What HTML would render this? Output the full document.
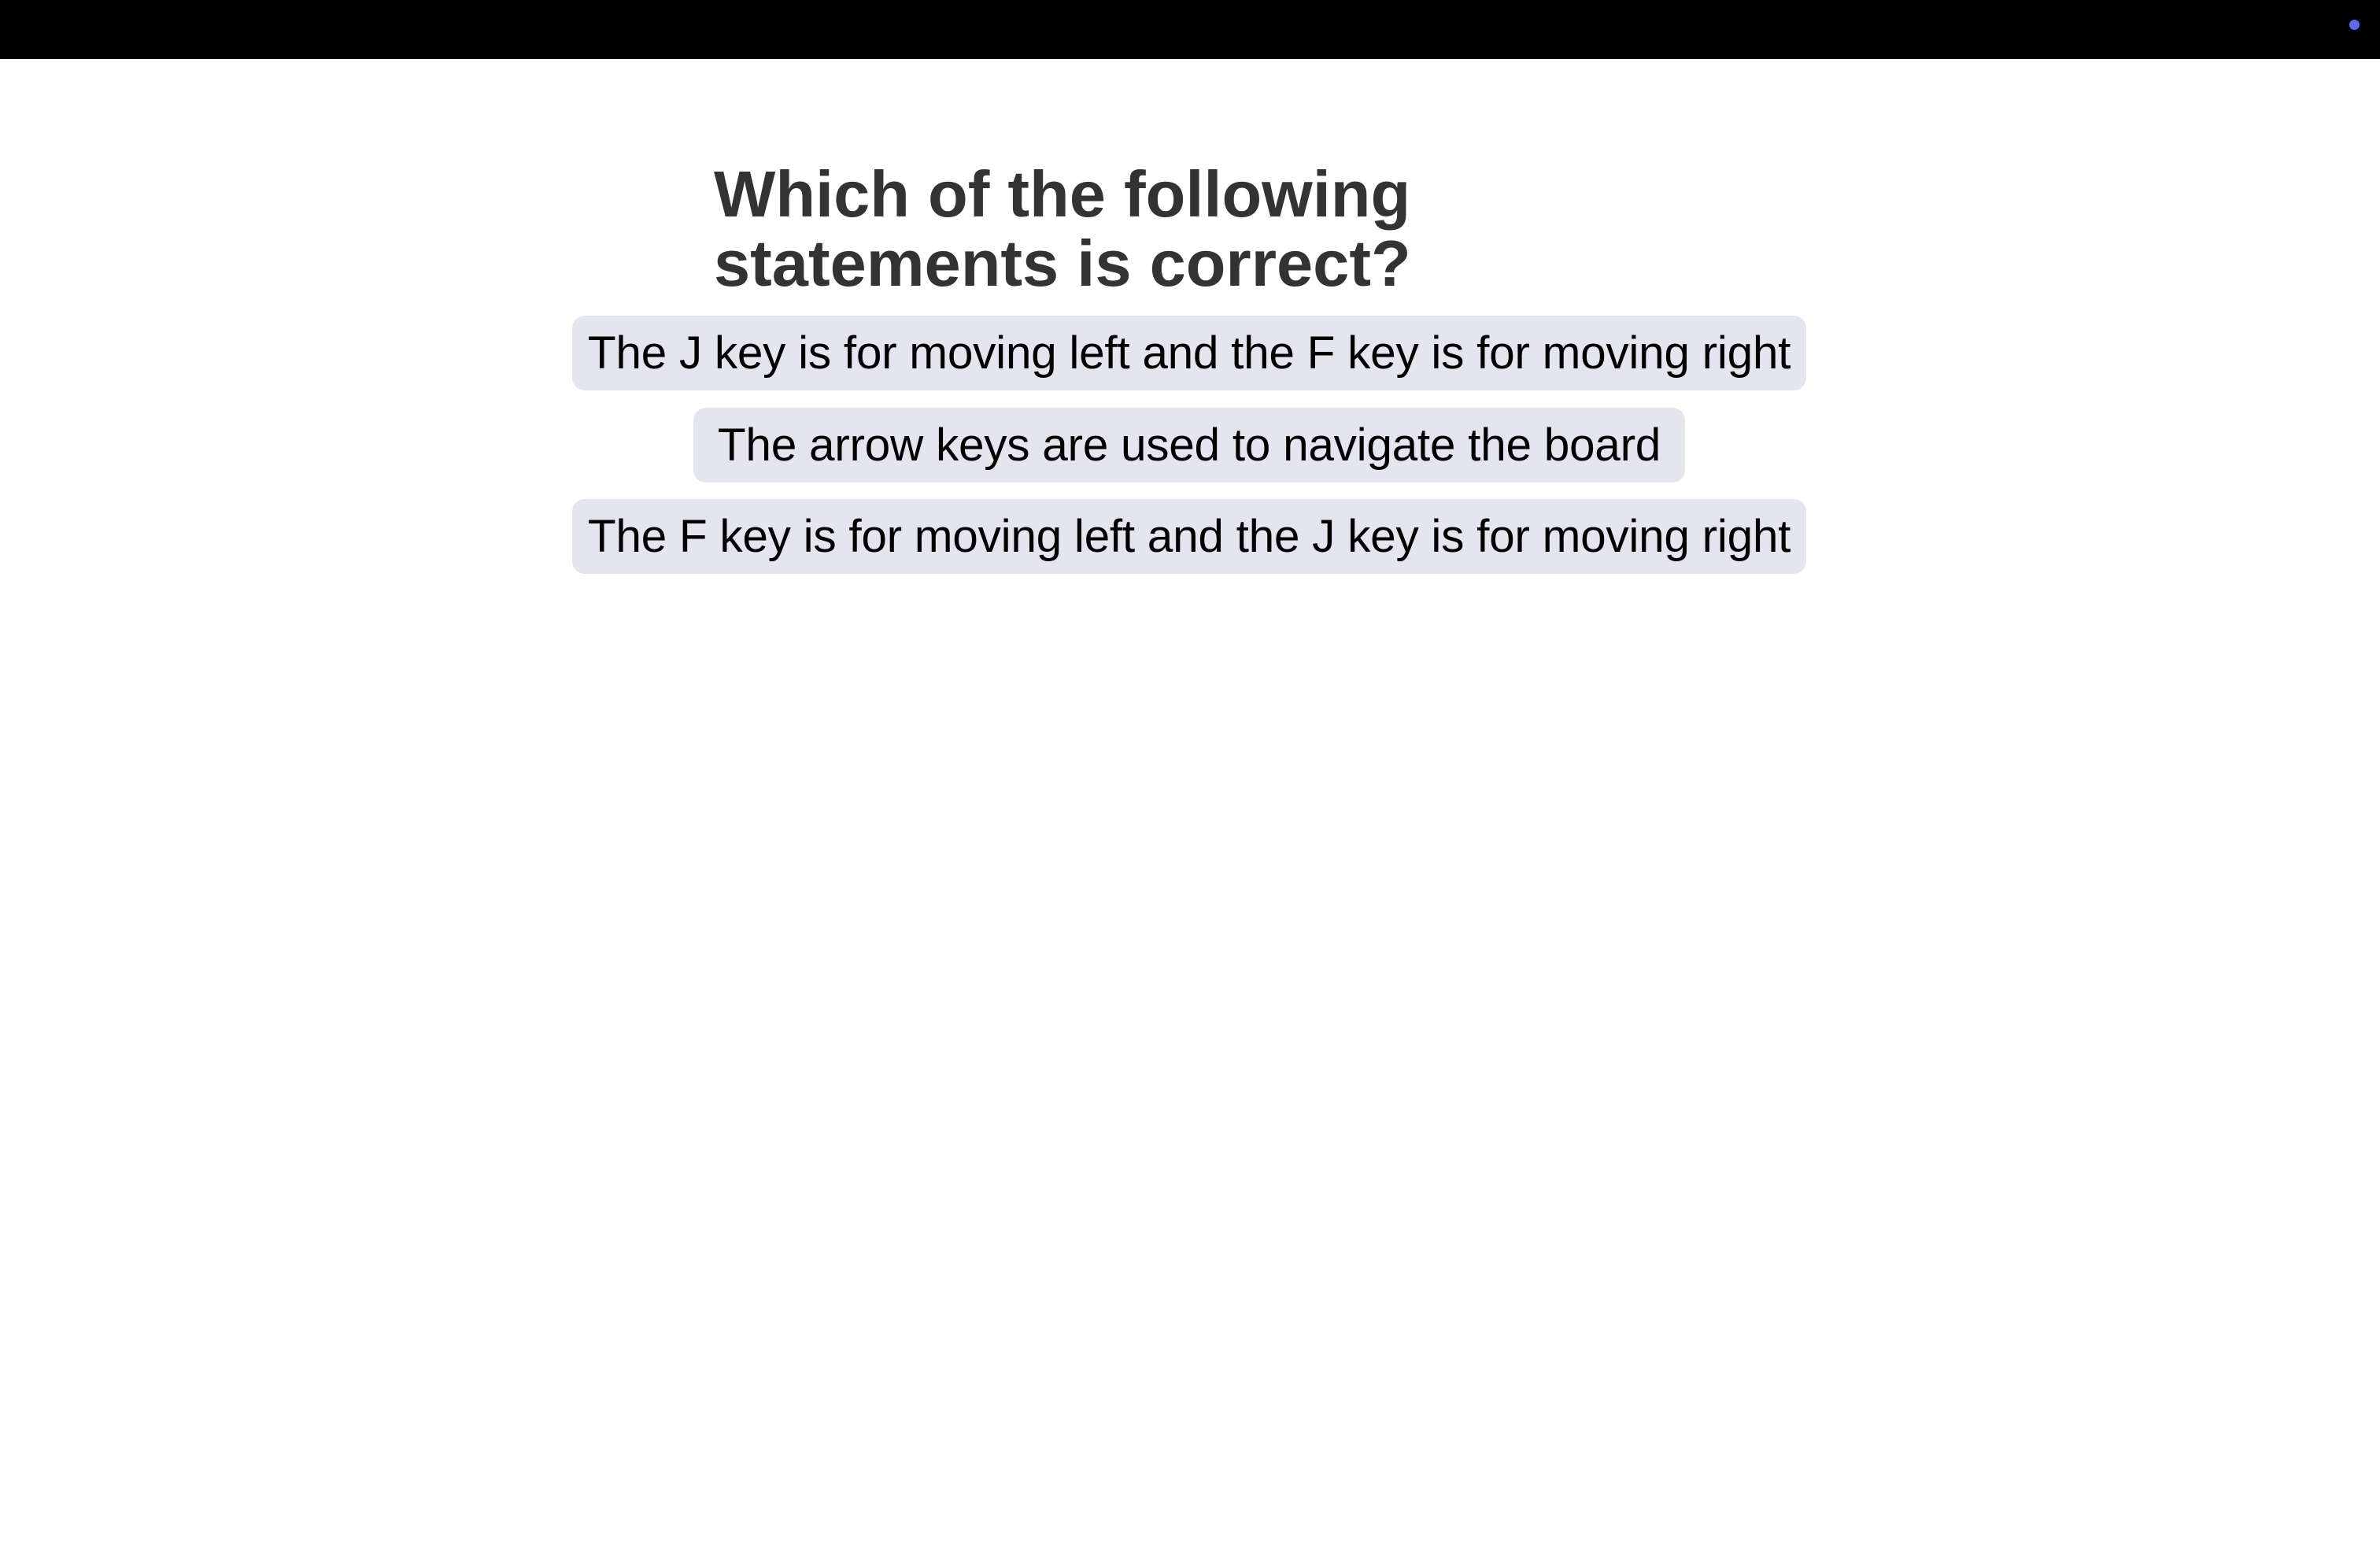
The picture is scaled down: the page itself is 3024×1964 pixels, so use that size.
<!DOCTYPE html>
<html><head><meta charset="utf-8"><style>
html,body{margin:0;padding:0;width:3024px;height:1964px;background:#fff;overflow:hidden;font-family:"Liberation Sans",Arial,sans-serif}
.bar{position:absolute;left:0;top:0;width:3024px;height:75px;background:#000}
.dot{position:absolute;left:2985px;top:25px;width:13px;height:13px;border-radius:50%;background:#6366f1}
h1{position:absolute;left:907px;top:203px;margin:0;font-size:83px;line-height:88px;font-weight:bold;color:#333}
.opt{position:absolute;height:95px;background:#e5e5ee;border-radius:16px;color:#000;font-size:58.6px;line-height:95px;text-align:center;white-space:nowrap;letter-spacing:-0.3px}
</style></head><body>
<div class="bar"></div><div class="dot"></div>
<h1>Which of the following<br>statements is correct?</h1>
<div class="opt" style="left:727px;top:401px;width:1568px">The J key is for moving left and the F key is for moving right</div>
<div class="opt" style="left:881px;top:518px;width:1260px">The arrow keys are used to navigate the board</div>
<div class="opt" style="left:727px;top:634px;width:1568px">The F key is for moving left and the J key is for moving right</div>
</body></html>
